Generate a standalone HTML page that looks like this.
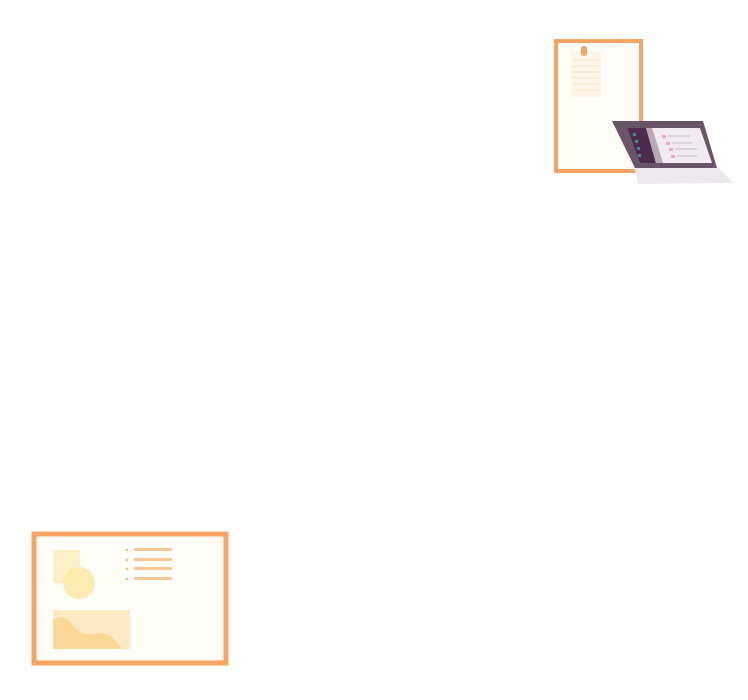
<!DOCTYPE html>
<html><head><style>html,body{margin:0;padding:0;background:#fff;width:748px;height:700px;overflow:hidden}</style></head>
<body>
<svg width="748" height="700" viewBox="0 0 748 700" xmlns="http://www.w3.org/2000/svg">
<!-- top frame -->
<rect x="556" y="41" width="85" height="130" fill="#fffdf8" stroke="#f9a463" stroke-width="4"/>
<rect x="571" y="52" width="30" height="45" fill="#fdf6e8"/>
<g stroke="#f7e6cc" stroke-width="1"><line x1="573" y1="60" x2="599" y2="60"/><line x1="573" y1="66" x2="599" y2="66"/><line x1="573" y1="72" x2="599" y2="72"/><line x1="573" y1="78" x2="599" y2="78"/><line x1="573" y1="84" x2="599" y2="84"/><line x1="573" y1="90" x2="599" y2="90"/></g>
<rect x="581" y="46" width="6" height="10" rx="3" fill="#f9a463"/>
<!-- laptop -->
<polygon points="634,167 718,167 733,183 638,184" fill="#ebe9ed"/>
<polygon points="612,121 703,121 717,168 635,168" fill="#6a5468"/>
<polygon points="627,128 700,128 712,163 640,163" fill="#efebf1"/>
<polygon points="627,128 646,128 656,163 640,163" fill="#4c2b4c"/>
<polygon points="646,128 652,128 663,163 656,163" fill="#b8a9b5"/>
<g fill="#3d8c8a"><rect x="633" y="133" width="3" height="3"/><rect x="635" y="140" width="3" height="3"/><rect x="637" y="147" width="3" height="3"/><rect x="638" y="154" width="3" height="3"/></g>
<g fill="#f2a6c8"><rect x="662" y="135" width="4" height="3"/><rect x="666" y="142" width="4" height="3"/><rect x="669" y="148" width="4" height="3"/><rect x="671" y="155" width="4" height="3"/></g>
<g stroke="#c7bcc8" stroke-width="1"><line x1="668" y1="136" x2="690" y2="136"/><line x1="672" y1="143" x2="692" y2="143"/><line x1="675" y1="149" x2="697" y2="149"/><line x1="677" y1="156" x2="697" y2="156"/></g>
<!-- bottom frame -->
<rect x="34" y="534" width="192" height="129" fill="#fffdf8" stroke="#f9a463" stroke-width="5"/>
<rect x="53" y="550" width="27" height="33" fill="#fdefc6"/>
<circle cx="79" cy="583" r="16" fill="#fbe9a8" opacity="0.85"/>
<g fill="#f9c896"><rect x="134" y="548" width="38" height="3"/><rect x="134" y="558" width="38" height="3"/><rect x="134" y="567" width="38" height="3"/><rect x="134" y="577" width="38" height="3"/></g>
<g fill="#f3b77a"><circle cx="127" cy="550" r="1.2"/><circle cx="127" cy="560" r="1.2"/><circle cx="127" cy="569" r="1.2"/><circle cx="127" cy="579" r="1.2"/></g>
<rect x="53" y="610" width="77" height="39" fill="#fde9c4"/>
<path d="M53,620 Q65,612 72,625 Q80,636 95,634 Q105,630 115,640 L122,649 L53,649 Z" fill="#fbd896"/>
</svg>
</body></html>
